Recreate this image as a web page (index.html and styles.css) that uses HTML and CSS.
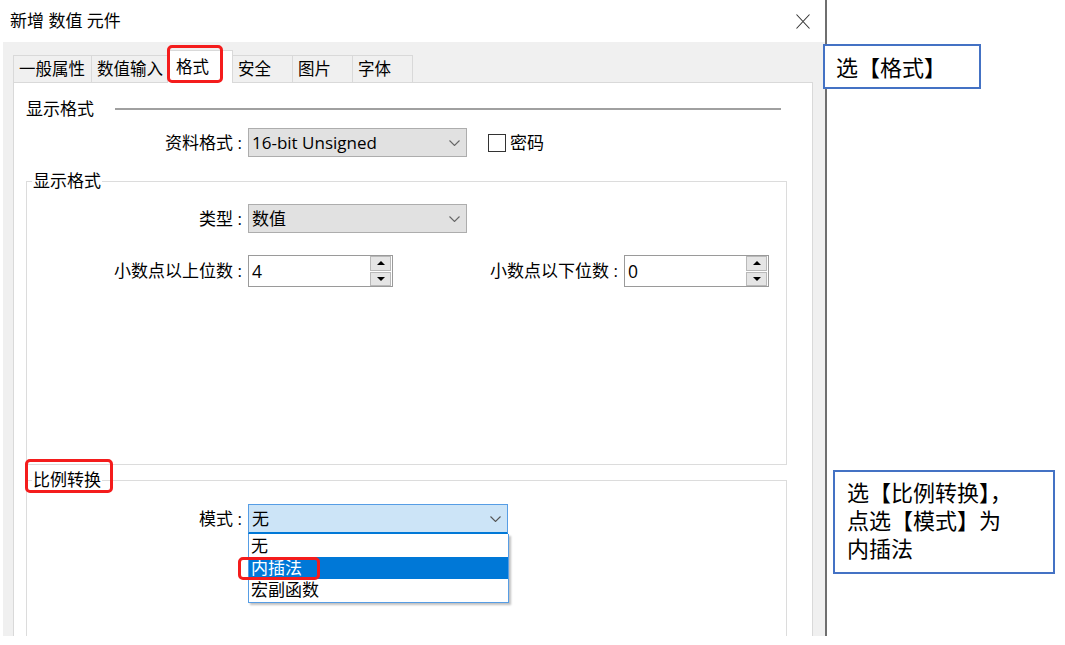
FILE: index.html
```html
<!DOCTYPE html>
<html lang="zh-CN">
<head>
  <meta charset="UTF-8" />
  <title>新增 数值 元件</title>
  <link rel="stylesheet" href="styles.css">
</head>
<body>

<div class="dialog">
  <div class="titlebar">
    <span>新增 数值 元件</span>
    <svg class="close" viewBox="0 0 14 15"><path d="M0.5 0.5 L13.5 14.5 M13.5 0.5 L0.5 14.5" stroke="#333" stroke-width="1.1" fill="none"/></svg>
  </div>

  <div class="body">
    <!-- tab strip -->
    <div class="tabs">
      <div class="tab">一般属性</div>
      <div class="tab">数值输入</div>
      <div class="tab active"><span class="hl hl-tab">格式</span></div>
      <div class="tab">安全</div>
      <div class="tab">图片</div>
      <div class="tab">字体</div>
    </div>

    <div class="panel">
      <div class="section-head"><span>显示格式</span><div class="rule"></div></div>

      <div class="row row-format">
        <label class="lbl">资料格式 :</label>
        <div class="select">
          <span>16-bit Unsigned</span>
          <svg class="chev" viewBox="0 0 11 6"><path d="M0.5 0.5 L5.5 5.5 L10.5 0.5" fill="none" stroke="#666" stroke-width="1.1"/></svg>
        </div>
        <label class="check"><span class="box"></span>密码</label>
      </div>

      <fieldset class="group g-format">
        <legend>显示格式</legend>
        <div class="row">
          <label class="lbl">类型 :</label>
          <div class="select">
            <span>数值</span>
            <svg class="chev" viewBox="0 0 11 6"><path d="M0.5 0.5 L5.5 5.5 L10.5 0.5" fill="none" stroke="#666" stroke-width="1.1"/></svg>
          </div>
        </div>
        <div class="row spin-row">
          <label class="lbl">小数点以上位数 :</label>
          <div class="spin">
            <span class="val">4</span>
            <div class="arrows">
              <div class="arrow"><svg viewBox="0 0 8 4"><path d="M0 4 L4 0 L8 4Z" fill="#000"/></svg></div>
              <div class="arrow"><svg viewBox="0 0 8 4"><path d="M0 0 L4 4 L8 0Z" fill="#000"/></svg></div>
            </div>
          </div>
          <label class="lbl lbl2">小数点以下位数 :</label>
          <div class="spin">
            <span class="val">0</span>
            <div class="arrows">
              <div class="arrow"><svg viewBox="0 0 8 4"><path d="M0 4 L4 0 L8 4Z" fill="#000"/></svg></div>
              <div class="arrow"><svg viewBox="0 0 8 4"><path d="M0 0 L4 4 L8 0Z" fill="#000"/></svg></div>
            </div>
          </div>
        </div>
      </fieldset>

      <fieldset class="group g-scale">
        <legend><span class="hl hl-legend">比例转换</span></legend>
        <div class="row">
          <label class="lbl">模式 :</label>
          <div class="combo">
            <div class="select open">
              <span>无</span>
              <svg class="chev" viewBox="0 0 11 6"><path d="M0.5 0.5 L5.5 5.5 L10.5 0.5" fill="none" stroke="#555" stroke-width="1.1"/></svg>
            </div>
            <ul class="droplist">
              <li>无</li>
              <li class="sel"><span class="hl hl-item">内插法</span></li>
              <li>宏副函数</li>
            </ul>
          </div>
        </div>
      </fieldset>
    </div>
  </div>
</div>

<div class="note note-1">选【格式】</div>
<div class="note note-2">选【比例转换】，<br>点选【模式】为<br>内插法</div>

</body>
</html>
```

FILE: styles.css
```css
* { box-sizing: border-box; }
body {
  margin: 0;
  width: 1065px;
  height: 645px;
  position: relative;
  overflow: hidden;
  background: #fff;
  font-family: "Open Sans", "Noto Sans CJK SC", sans-serif;
  font-size: 17px;
  line-height: 22px;
  color: #000;
}
.dialog {
  width: 827px;
  height: 636px;
  border-right: 2px solid #6f6f6f;
  display: flex;
  flex-direction: column;
  overflow: hidden;
}
.titlebar {
  height: 42px;
  flex: none;
  display: flex;
  align-items: center;
  justify-content: space-between;
  padding: 0 15px 0 10px;
}
.close {
  width: 14px;
  height: 15px;
}
.body {
  flex: 1;
  min-height: 0;
  margin-left: 3px;
  background: #f0f0f0;
  padding: 8px 12px 0 10px;
  display: flex;
  flex-direction: column;
}

/* tabs */
.tabs {
  display: flex;
  align-items: flex-end;
  flex: none;
}
.tab {
  height: 27px;
  border: 1px solid #d9d9d9;
  border-right: none;
  border-bottom: none;
  padding: 2px 0 0 5px;
  font-size: 16.5px;
  white-space: nowrap;
}
.tab:nth-child(1) { width: 78px; }
.tab:nth-child(2) { width: 76px; }
.tab:nth-child(4), .tab:nth-child(5) { width: 60px; }
.tab:last-child {
  width: 61px;
  border-right: 1px solid #d9d9d9;
}
.tab.active {
  width: 66px;
  height: 33px;
  background: #fff;
  border-right: 1px solid #d9d9d9;
  margin-bottom: -1px;
  padding: 5px 0 0 8px;
  position: relative;
  z-index: 1;
}
.tab.active + .tab { margin-left: -1px; }

/* page */
.panel {
  flex: 1;
  min-height: 0;
  background: #fff;
  border: 1px solid #d9d9d9;
  border-bottom: none;
  padding: 15px 25px 0 12px;
}
.section-head {
  display: flex;
  align-items: center;
}
.rule {
  flex: 1;
  height: 2px;
  background: #a0a0a0;
  margin: 0 6px 0 21px;
}
.row {
  display: flex;
  align-items: center;
}
.row-format { margin-top: 8px; }
.lbl {
  flex: none;
  width: 216px;
  text-align: right;
  margin-right: 6px;
  white-space: nowrap;
}
.group .lbl { width: 215px; }
.group .lbl2 { width: 225px; }

.select {
  flex: none;
  width: 219px;
  height: 29px;
  background: #e1e1e1;
  border: 1px solid #adadad;
  display: flex;
  align-items: center;
  justify-content: space-between;
  padding: 0 6px 0 3px;
}
.chev {
  width: 11px;
  height: 6px;
}
.check {
  display: flex;
  align-items: center;
  gap: 4px;
  margin-left: 21px;
}
.box {
  width: 18px;
  height: 18px;
  border: 1px solid #333;
  background: #fff;
}

fieldset.group {
  margin: 13px 0 0;
  padding: 12px 0 177px;
  border: 1px solid #dcdcdc;
  min-width: 0;
}
legend {
  margin-left: 5px;
  padding: 0 1px;
}
.spin-row { margin-top: 22px; }
.spin {
  flex: none;
  width: 145px;
  height: 32px;
  border: 1px solid #9a9a9a;
  display: flex;
}
.spin .val {
  flex: 1;
  padding-left: 3px;
  line-height: 30px;
  font-size: 17.5px;
}
.arrows {
  width: 23px;
  display: flex;
  flex-direction: column;
  gap: 1px;
  padding: 0 1px;
}
.arrow {
  flex: 1;
  background: #e5e5e5;
  border: 1px solid #b9b9b9;
  display: flex;
  align-items: center;
  justify-content: center;
}
.arrow svg {
  width: 8px;
  height: 4px;
}

fieldset.g-scale {
  margin-top: 4px;
  padding: 13px 0 120px;
}
.combo {
  position: relative;
}
.select.open {
  width: 260px;
  height: 30px;
  background: #cce4f7;
  border: 1px solid #569de5;
  border-bottom: 2px solid #0078d7;
}
.droplist {
  position: absolute;
  top: 100%;
  left: 0;
  width: 261px;
  margin: 0;
  padding: 1px 0;
  list-style: none;
  background: #fff;
  border: 1px solid #569de5;
  border-top: none;
  box-shadow: 2px 2px 2px rgba(0,0,0,0.25);
  z-index: 2;
}
.droplist li {
  height: 22px;
  padding-left: 2px;
}
.droplist li.sel {
  background: #0078d7;
  color: #fff;
}

/* red call-out frames */
.hl {
  display: inline-block;
  position: relative;
  line-height: 22px;
}
.hl::after {
  content: "";
  position: absolute;
  border: 3px solid #f41c1c;
  border-radius: 5px;
}
.hl-tab::after { inset: -11px -14px -5px -9px; }
.hl-legend::after { inset: -10px -12px -2px -8px; }
.hl-item::after { inset: 0 -18px -1px -13px; }

/* note boxes */
.note {
  position: absolute;
  background: #fff;
  border: 2px solid #4472c4;
  font-family: "Noto Sans CJK SC", sans-serif;
  font-size: 22px;
}
.note-1 {
  left: 823px;
  top: 44px;
  width: 158px;
  height: 45px;
  padding-left: 11px;
  line-height: 41px;
}
.note-2 {
  left: 833px;
  top: 470px;
  width: 222px;
  height: 104px;
  padding: 5px 0 0 12px;
  line-height: 28px;
}
```
